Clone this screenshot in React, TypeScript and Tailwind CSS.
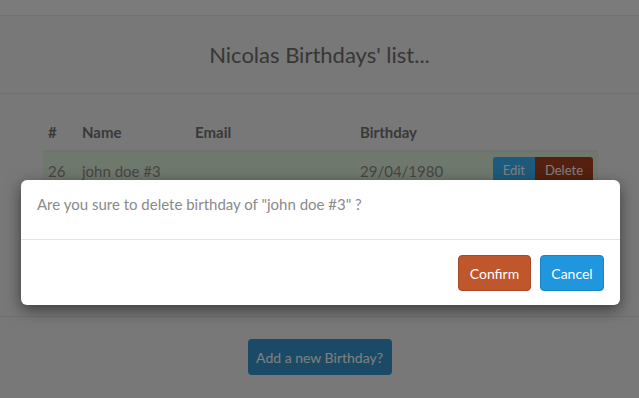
import React from "react";

const font = { fontFamily: "Lato, 'Open Sans', sans-serif" };

const Row = ({ id, name, email, birthday }: { id: number; name: string; email: string; birthday: string }) => (
  <div className="grid grid-cols-[34px_113px_165px_1fr_auto] items-center h-[38px] bg-[#dff0d8] px-[5px] text-[15px] text-[#8c8c8c]">
    <span>{id}</span>
    <span>{name}</span>
    <span>{email}</span>
    <span>{birthday}</span>
    <div className="flex">
      <button className="h-[28px] px-[10px] text-[13px] text-white bg-[#3ab4f8] rounded-l-[3px]">Edit</button>
      <button className="h-[28px] px-[10px] text-[13px] text-white bg-[#aa401e] rounded-r-[3px]">Delete</button>
    </div>
  </div>
);

export default function App() {
  return (
    <div className="relative w-[639px] h-[398px] overflow-hidden bg-[#f0f0f0]" style={font}>
      {/* page */}
      <div className="h-[16px] bg-[#f6f6f6] border-b border-[#e0e0e0]" />
      <div className="h-[78px] flex items-center justify-center border-b border-[#e0e0e0]">
        <h1 className="text-[22px] text-[#6e6e6e]">Nicolas Birthdays' list...</h1>
      </div>
      <div className="h-[223px] border-b border-[#e0e0e0] pl-[43px] pr-[41px] pt-[20px]">
        <div className="grid grid-cols-[34px_113px_165px_1fr] items-center h-[38px] px-[5px] border-b-2 border-[#e4e4e4] text-[15px] font-bold text-[#737373]">
          <span>#</span>
          <span>Name</span>
          <span>Email</span>
          <span>Birthday</span>
        </div>
        <Row id={26} name="john doe #3" email="" birthday="29/04/1980" />
      </div>
      <div className="flex justify-center pt-[22px]">
        <button className="h-[36px] w-[144px] rounded-[4px] bg-[#3494cc] text-[14px] text-white">
          Add a new Birthday?
        </button>
      </div>

      {/* backdrop */}
      <div className="absolute inset-0 bg-black/50" />

      {/* modal */}
      <div className="absolute left-[21px] top-[180px] w-[599px] bg-white rounded-[6px] shadow-[0_5px_15px_rgba(0,0,0,0.5)]">
        <div className="h-[60px] px-[16px] pt-[13px] text-[15px] text-[#8a8a8a] border-b border-[#e5e5e5]">
          Are you sure to delete birthday of "john doe #3" ?
        </div>
        <div className="flex justify-end gap-[9px] px-[16px] pt-[15px] pb-[14px]">
          <button className="h-[36px] w-[73px] rounded-[4px] bg-[#c0562b] border border-[#a84a24] text-[14px] text-white">
            Confirm
          </button>
          <button className="h-[36px] w-[64px] rounded-[4px] bg-[#1f96dd] border border-[#1a85c4] text-[14px] text-white">
            Cancel
          </button>
        </div>
      </div>
    </div>
  );
}
